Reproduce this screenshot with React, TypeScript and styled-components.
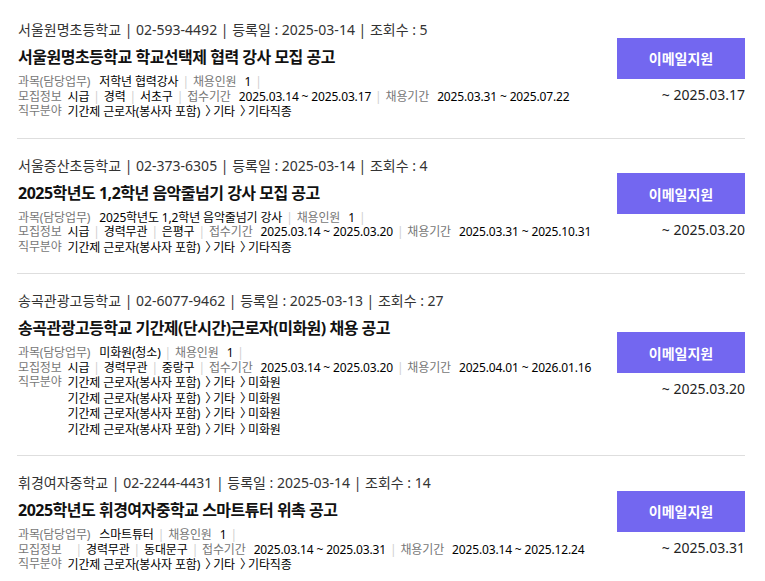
import React from "react";
import styled, { createGlobalStyle } from "styled-components";

const GlobalStyle = createGlobalStyle`
  body {
    margin: 0;
    background: #fff;
    font-family: "Noto Sans", "Noto Sans CJK KR", sans-serif;
    color: #222;
  }
`;

const List = styled.div`
  padding: 3px 20px 0 17px;
`;

const Item = styled.div`
  display: flex;
  align-items: center;
  justify-content: space-between;
  padding: 17px 0 18px 1px;
  border-bottom: 1px solid #dedede;
  &:last-child {
    border-bottom: none;
  }
`;

const Body = styled.div`
  flex: 1;
  min-width: 0;
`;

const Meta = styled.div`
  font-size: 14px;
  line-height: 20px;
  color: #333;
`;

const Title = styled.div`
  margin-top: 6px;
  font-size: 16px;
  line-height: 22px;
  font-weight: 700;
  color: #111;
  letter-spacing: -0.5px;
`;

const Info = styled.div`
  margin-top: 7px;
  font-size: 12px;
  line-height: 14.5px;
  letter-spacing: -0.15px;
`;

const Row = styled.div`
  display: flex;
  align-items: flex-start;
  white-space: nowrap;
  height: 14.5px;
  &:last-child {
    height: auto;
  }
`;

const Label = styled.span<{ $gap?: number }>`
  color: #777;
  margin-right: ${(p) => p.$gap ?? 6}px;
`;

const Value = styled.span`
  color: #000;
`;

const Sep = styled.span`
  color: #cfcfcf;
  margin: 0 4px;
`;

const Paths = styled.div`
  display: flex;
  flex-direction: column;
`;

const Arrow = styled.span`
  font-family: "Noto Sans CJK KR", sans-serif;
  letter-spacing: -4px;
  margin-left: 5px;
`;

const Side = styled.div`
  width: 128px;
  padding-top: 3px;
  display: flex;
  flex-direction: column;
  align-items: flex-end;
  flex-shrink: 0;
`;

const ApplyButton = styled.button`
  width: 128px;
  height: 41px;
  border: none;
  background: #7367f0;
  color: #fff;
  font-family: "Noto Sans CJK KR", sans-serif;
  font-size: 14px;
  font-weight: 700;
  cursor: pointer;
`;

const Deadline = styled.div`
  margin-top: 6px;
  font-size: 14px;
  line-height: 20px;
  color: #222;
`;

type Job = {
  school: string;
  phone: string;
  date: string;
  views: number;
  title: string;
  subject: string;
  count: number;
  pay: string;
  career: string;
  area: string;
  receive: string;
  hire: string;
  fields: string[][];
  deadline: string;
};

const etc = ["기간제 근로자(봉사자 포함)", "기타", "기타직종"];
const cleaner = ["기간제 근로자(봉사자 포함)", "기타", "미화원"];

const jobs: Job[] = [
  {
    school: "서울원명초등학교",
    phone: "02-593-4492",
    date: "2025-03-14",
    views: 5,
    title: "서울원명초등학교 학교선택제 협력 강사 모집 공고",
    subject: "저학년 협력강사",
    count: 1,
    pay: "시급",
    career: "경력",
    area: "서초구",
    receive: "2025.03.14 ~ 2025.03.17",
    hire: "2025.03.31 ~ 2025.07.22",
    fields: [etc],
    deadline: "~ 2025.03.17",
  },
  {
    school: "서울증산초등학교",
    phone: "02-373-6305",
    date: "2025-03-14",
    views: 4,
    title: "2025학년도 1,2학년 음악줄넘기 강사 모집 공고",
    subject: "2025학년도 1,2학년 음악줄넘기 강사",
    count: 1,
    pay: "시급",
    career: "경력무관",
    area: "은평구",
    receive: "2025.03.14 ~ 2025.03.20",
    hire: "2025.03.31 ~ 2025.10.31",
    fields: [etc],
    deadline: "~ 2025.03.20",
  },
  {
    school: "송곡관광고등학교",
    phone: "02-6077-9462",
    date: "2025-03-13",
    views: 27,
    title: "송곡관광고등학교 기간제(단시간)근로자(미화원) 채용 공고",
    subject: "미화원(청소)",
    count: 1,
    pay: "시급",
    career: "경력무관",
    area: "중랑구",
    receive: "2025.03.14 ~ 2025.03.20",
    hire: "2025.04.01 ~ 2026.01.16",
    fields: [cleaner, cleaner, cleaner, cleaner],
    deadline: "~ 2025.03.20",
  },
  {
    school: "휘경여자중학교",
    phone: "02-2244-4431",
    date: "2025-03-14",
    views: 14,
    title: "2025학년도 휘경여자중학교 스마트튜터 위촉 공고",
    subject: "스마트튜터",
    count: 1,
    pay: "",
    career: "경력무관",
    area: "동대문구",
    receive: "2025.03.14 ~ 2025.03.31",
    hire: "2025.03.14 ~ 2025.12.24",
    fields: [etc],
    deadline: "~ 2025.03.31",
  },
];

const FieldPath: React.FC<{ parts: string[] }> = ({ parts }) => (
  <Value>
    {parts.map((p, i) => (
      <React.Fragment key={i}>
        {i > 0 && <Arrow>〉</Arrow>}
        {p}
      </React.Fragment>
    ))}
  </Value>
);

const JobItem: React.FC<{ job: Job }> = ({ job }) => (
  <Item>
    <Body>
      <Meta>
        {job.school} | {job.phone} | 등록일 : {job.date} | 조회수 : {job.views}
      </Meta>
      <Title>{job.title}</Title>
      <Info>
        <Row>
          <Label $gap={9}>과목(담당업무)</Label>
          <Value>{job.subject}</Value>
          <Sep>|</Sep>
          <Label $gap={8}>채용인원</Label>
          <Value>{job.count}</Value>
          <Sep>|</Sep>
        </Row>
        <Row>
          <Label $gap={job.pay ? 6 : 10}>모집정보</Label>
          {job.pay && <Value>{job.pay}</Value>}
          <Sep>|</Sep>
          <Value>{job.career}</Value>
          <Sep>|</Sep>
          <Value>{job.area}</Value>
          <Sep>|</Sep>
          <Label $gap={8}>접수기간</Label>
          <Value>{job.receive}</Value>
          <Sep>|</Sep>
          <Label $gap={8}>채용기간</Label>
          <Value>{job.hire}</Value>
        </Row>
        <Row>
          <Label $gap={6}>직무분야</Label>
          <Paths>
            {job.fields.map((f, i) => (
              <FieldPath key={i} parts={f} />
            ))}
          </Paths>
        </Row>
      </Info>
    </Body>
    <Side>
      <ApplyButton>이메일지원</ApplyButton>
      <Deadline>{job.deadline}</Deadline>
    </Side>
  </Item>
);

export default function App() {
  return (
    <>
      <GlobalStyle />
      <List>
        {jobs.map((j) => (
          <JobItem key={j.school} job={j} />
        ))}
      </List>
    </>
  );
}
